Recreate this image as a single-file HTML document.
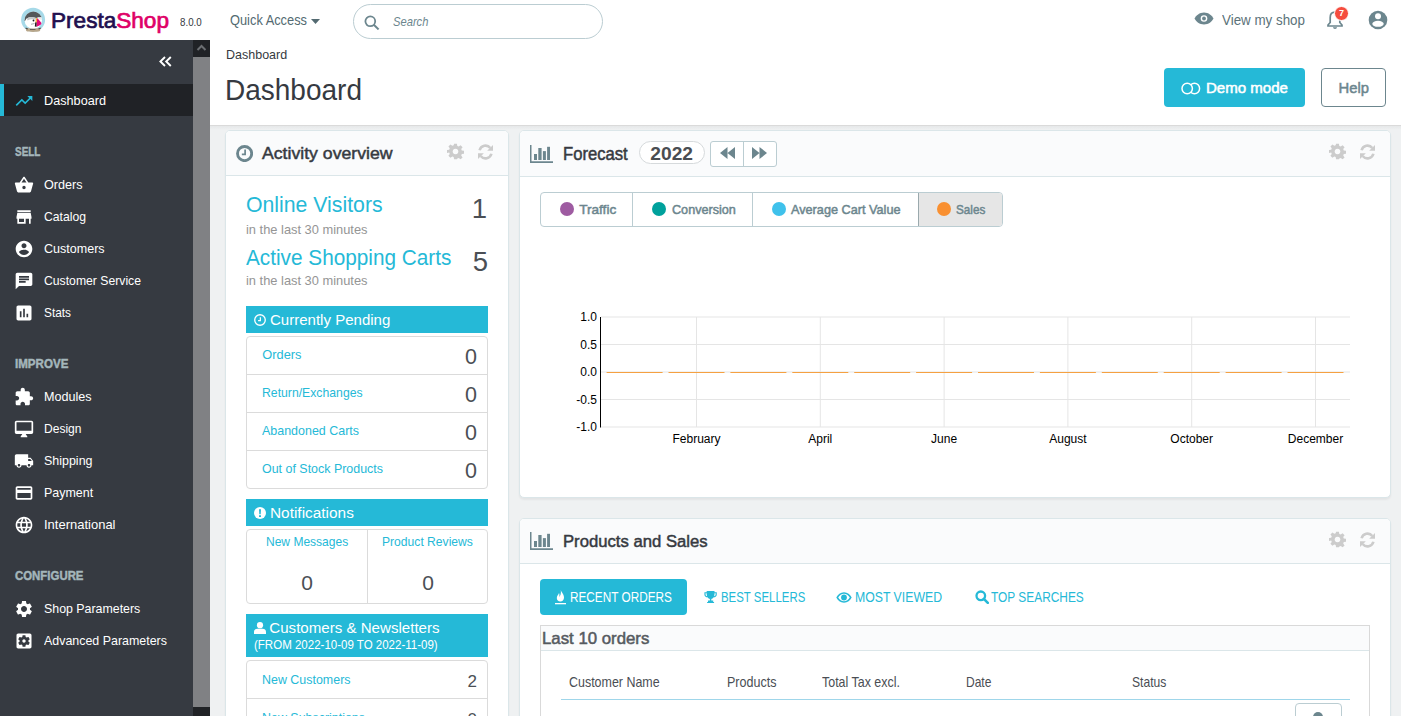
<!DOCTYPE html>
<html><head><meta charset="utf-8"><style>
*{box-sizing:border-box;margin:0;padding:0}
html,body{width:1401px;height:716px;overflow:hidden;background:#eff1f2;font-family:"Liberation Sans",sans-serif;color:#363a41}
.a{position:absolute}
.nw{white-space:nowrap}
.panel{background:#fff;border:1px solid #dbe6e9;border-radius:5px;overflow:hidden;box-shadow:0 2px 2px rgba(0,0,0,.05)}
.ph{background:#fafbfc;border-bottom:1px solid #dbe6e9}
</style></head><body>
<div class="a" style="left:0px;top:0px;width:1401px;height:40px;background:#fff"></div><svg class="a" style="left:19px;top:6px" width="28" height="28" viewBox="0 0 28 28">
<defs><clipPath id="cp"><circle cx="14.3" cy="14.2" r="8.7"/></clipPath></defs>
<circle cx="14.1" cy="13.8" r="12" fill="#a6d9e8"/>
<g clip-path="url(#cp)">
<rect x="0" y="0" width="28" height="28" fill="#fff"/>
<path d="M4 4H25V11.5C22 11 19 11.3 17 12C14 11 10 11.2 7.5 12.5L6 15H4Z" fill="#545759"/>
<path d="M8 12.2C10.5 10.8 14 10.8 17.3 12L16.5 13.8C14 13 11 13.2 8.5 14.5Z" fill="#c4c8ca"/>
<path d="M18.5 11.2L22.5 11.5L23.5 14L19.5 13Z" fill="#e8eaeb"/>
<path d="M18.3 12L23.4 18L17.6 20.8C17.3 18 17.5 15 18.3 12Z" fill="#e4087a"/>
<path d="M17 12.2L18.2 12L17.6 16.5L16.3 16.8Z" fill="#f6a623"/>
<path d="M16.2 16.5L17.6 16.3L17.5 20.8L15.8 20.5Z" fill="#1d1d1d"/>
<path d="M12 18.3L15.5 17.5" stroke="#777" stroke-width="0.6"/>
</g>
<circle cx="14.5" cy="14.5" r="0.9" fill="#1d1d1d"/>
<path d="M6.8 21.8C9 22.8 19 22.8 21.5 21.8L21 25C18 26.2 10 26.2 7.2 25Z" fill="#b9a78b"/>
<path d="M6.8 21.5L9 22.6L8.5 23.6L6.5 22.8Z M21.5 21.5L19.3 22.6L19.8 23.6L21.8 22.8Z M11 23.3H16.5V24H11Z" fill="#4a4a4a"/>
</svg><div class="a nw" style="left:50.5px;top:9.8px;font-size:22px;line-height:22px;color:#363a41;transform-origin:0 0;transform:scaleX(1.0262);-webkit-text-stroke:0.7px"><span style="color:#22104f">Presta</span><span style="color:#df0067">Shop</span></div><div class="a nw" style="left:180px;top:17.1px;font-size:10.6px;line-height:10.6px;color:#363a41;transform-origin:0 0;transform:scaleX(0.9210)">8.0.0</div><div class="a nw" style="left:229.5px;top:13.3px;font-size:14.2px;line-height:14.2px;color:#536a71;transform-origin:0 0;transform:scaleX(0.9042)">Quick Access</div><svg class="a" style="left:311px;top:19px" width="9" height="5" viewBox="0 0 9 5"><path d="M0 0H9L4.5 5Z" fill="#536a71"/></svg><div class="a" style="left:353px;top:4px;width:250px;height:35px;border:1px solid #bbcdd2;border-radius:17.5px"></div><svg class="a" style="left:364px;top:14.5px" width="16" height="15" viewBox="0 0 16 15"><circle cx="6.3" cy="6.3" r="4.9" fill="none" stroke="#6c868e" stroke-width="1.8"/><path d="M9.8 9.8 L14.6 14.4" stroke="#6c868e" stroke-width="2"/></svg><div class="a nw" style="left:392.5px;top:15px;font-size:13.6px;line-height:13.6px;color:#6c868e;font-style:italic;transform-origin:0 0;transform:scaleX(0.8218)">Search</div><svg class="a" style="left:1194px;top:12px" width="20" height="13" viewBox="0 0 20 13"><path d="M10 0.5C5.5 0.5 2 3.5 0.5 6.5C2 9.5 5.5 12.5 10 12.5C14.5 12.5 18 9.5 19.5 6.5C18 3.5 14.5 0.5 10 0.5Z" fill="#6c868e"/><circle cx="10" cy="6.5" r="3.3" fill="#fff"/><circle cx="10" cy="6.5" r="1.9" fill="#6c868e"/></svg><div class="a nw" style="left:1222px;top:13.2px;font-size:14.6px;line-height:14.6px;color:#5b7279;transform-origin:0 0;transform:scaleX(0.9163)">View my shop</div><svg class="a" style="left:1326px;top:10px" width="18" height="19" viewBox="0 0 18 19"><path d="M9 2.2C6 2.2 4.2 4.5 4.2 7.5V12.5L2 15V16H16V15L13.8 12.5V7.5C13.8 4.5 12 2.2 9 2.2Z" fill="none" stroke="#6c868e" stroke-width="1.7"/><path d="M7 17.3H11C11 18.3 10 18.9 9 18.9S7 18.3 7 17.3Z" fill="#6c868e"/></svg><div class="a" style="left:1334px;top:5.6px;width:15px;height:15px;border-radius:7.5px;border:1.5px solid #fff;background:#f54c3e;color:#fff;font-size:9px;font-weight:700;line-height:12px;text-align:center">7</div><svg class="a" style="left:1368px;top:10px" width="20" height="20" viewBox="0 0 20 20"><circle cx="10" cy="10" r="9.3" fill="#6c868e"/><circle cx="10" cy="6.3" r="3" fill="#fff"/><ellipse cx="10" cy="13.8" rx="5.7" ry="3" fill="#fff"/></svg><div class="a" style="left:0px;top:40px;width:193px;height:676px;background:#363a41"></div><svg class="a" style="left:158px;top:56px" width="15" height="11" viewBox="0 0 15 11"><path d="M7 1L2.4 5.5L7 10M12.8 1L8.2 5.5L12.8 10" fill="none" stroke="#fff" stroke-width="1.9"/></svg><div class="a" style="left:0px;top:84px;width:193px;height:32px;background:#202226"></div><div class="a" style="left:0px;top:84px;width:4px;height:32px;background:#25b9d7"></div><svg class="a" style="left:14px;top:90.7px" width="20" height="20" viewBox="0 0 24 24"><path d="M16 6l2.29 2.29-4.88 4.88-4-4L2 16.59 3.41 18l6-6 4 4 6.3-6.29L22 12V6z" fill="#25b9d7"/></svg><div class="a nw" style="left:44px;top:94.0px;font-size:13.6px;line-height:13.6px;color:#fff;transform-origin:0 0;transform:scaleX(0.9321)">Dashboard</div><div class="a nw" style="left:15.3px;top:146px;font-size:12.3px;line-height:12.3px;color:#a4b6bb;font-weight:700;-webkit-text-stroke:0.45px #a4b6bb;transform-origin:0 0;transform:scaleX(0.8080)">SELL</div><svg class="a" style="left:14px;top:175.0px" width="20" height="20" viewBox="0 0 24 24"><path d="M17.21 9l-4.38-6.56c-.19-.28-.51-.42-.83-.42-.32 0-.64.14-.83.43L6.79 9H2c-.55 0-1 .45-1 1 0 .09.01.18.04.27l2.54 9.27c.23.84 1 1.46 1.920 1.46h13c.92 0 1.69-.62 1.93-1.46l2.54-9.27L23 10c0-.55-.45-1-1-1h-4.79zM9 9l3-4.4L15 9H9zm3 8c-1.1 0-2-.9-2-2s.9-2 2-2 2 .9 2 2-.9 2-2 2z" fill="#fff"/></svg><div class="a nw" style="left:44px;top:178.3px;font-size:13.6px;line-height:13.6px;color:#fff;transform-origin:0 0;transform:scaleX(0.9291)">Orders</div><svg class="a" style="left:14px;top:207.0px" width="20" height="20" viewBox="0 0 24 24"><path d="M20 4H4v2h16V4zm1 10v-2l-1-5H4l-1 5v2h1v6h10v-6h4v6h2v-6h1zm-9 4H6v-4h6v4z" fill="#fff"/></svg><div class="a nw" style="left:44px;top:210.3px;font-size:13.6px;line-height:13.6px;color:#fff;transform-origin:0 0;transform:scaleX(0.8963)">Catalog</div><svg class="a" style="left:14px;top:239.0px" width="20" height="20" viewBox="0 0 24 24"><path d="M12 2C6.48 2 2 6.48 2 12s4.48 10 10 10 10-4.48 10-10S17.52 2 12 2zm0 3c1.66 0 3 1.34 3 3s-1.34 3-3 3-3-1.34-3-3 1.34-3 3-3zm0 14.2c-2.5 0-4.710-1.28-6-3.22.03-1.99 4-3.08 6-3.08 1.99 0 5.97 1.09 6 3.08-1.29 1.94-3.5 3.22-6 3.22z" fill="#fff"/></svg><div class="a nw" style="left:44px;top:242.3px;font-size:13.6px;line-height:13.6px;color:#fff;transform-origin:0 0;transform:scaleX(0.9221)">Customers</div><svg class="a" style="left:14px;top:271.0px" width="20" height="20" viewBox="0 0 24 24"><path d="M20 2H4c-1.1 0-1.99.9-1.99 2L2 22l4-4h14c1.1 0 2-.9 2-2V4c0-1.1-.9-2-2-2zM6 9h12v2H6V9zm8 5H6v-2h8v2zm4-6H6V6h12v2z" fill="#fff"/></svg><div class="a nw" style="left:44px;top:274.3px;font-size:13.6px;line-height:13.6px;color:#fff;transform-origin:0 0;transform:scaleX(0.8979)">Customer Service</div><svg class="a" style="left:14px;top:303.0px" width="20" height="20" viewBox="0 0 24 24"><path d="M19 3H5c-1.1 0-2 .9-2 2v14c0 1.1.9 2 2 2h14c1.1 0 2-.9 2-2V5c0-1.1-.9-2-2-2zM9 17H7v-7h2v7zm4 0h-2V7h2v10zm4 0h-2v-4h2v4z" fill="#fff"/></svg><div class="a nw" style="left:44px;top:306.3px;font-size:13.6px;line-height:13.6px;color:#fff;transform-origin:0 0;transform:scaleX(0.8714)">Stats</div><div class="a nw" style="left:15.3px;top:358px;font-size:12.3px;line-height:12.3px;color:#a4b6bb;font-weight:700;-webkit-text-stroke:0.45px #a4b6bb;transform-origin:0 0;transform:scaleX(0.9415)">IMPROVE</div><svg class="a" style="left:14px;top:386.7px" width="20" height="20" viewBox="0 0 24 24"><path d="M20.5 11H19V7c0-1.1-.9-2-2-2h-4V3.5C13 2.12 11.88 1 10.5 1S8 2.12 8 3.5V5H4c-1.1 0-1.99.9-1.990 2v3.8H3.5c1.49 0 2.7 1.21 2.7 2.7s-1.21 2.7-2.7 2.7H2V20c0 1.1.9 2 2 2h3.8v-1.5c0-1.49 1.21-2.7 2.7-2.7 1.49 0 2.7 1.21 2.7 2.7V22H17c1.1 0 2-.9 2-2v-4h1.5c1.38 0 2.5-1.12 2.5-2.5S21.88 11 20.5 11z" fill="#fff"/></svg><div class="a nw" style="left:44px;top:390.0px;font-size:13.6px;line-height:13.6px;color:#fff;transform-origin:0 0;transform:scaleX(0.9262)">Modules</div><svg class="a" style="left:14px;top:418.7px" width="20" height="20" viewBox="0 0 24 24"><path d="M21 2H3c-1.1 0-2 .9-2 2v12c0 1.1.9 2 2 2h7l-2 3v1h8v-1l-2-3h7c1.1 0 2-.9 2-2V4c0-1.1-.9-2-2-2zm0 12H3V4h18v10z" fill="#fff"/></svg><div class="a nw" style="left:44px;top:422.0px;font-size:13.6px;line-height:13.6px;color:#fff;transform-origin:0 0;transform:scaleX(0.8859)">Design</div><svg class="a" style="left:14px;top:450.7px" width="20" height="20" viewBox="0 0 24 24"><path d="M20 8h-3V4H3c-1.1 0-2 .9-2 2v11h2c0 1.66 1.34 3 3 3s3-1.34 3-3h6c0 1.66 1.34 3 3 3s3-1.34 3-3h2v-5l-3-4zM6 18.5c-.83 0-1.5-.67-1.5-1.5s.67-1.5 1.5-1.5 1.5.67 1.5 1.5-.67 1.5-1.5 1.5zm13.5-9l1.96 2.5H17V9.5h2.5zm-1.5 9c-.83 0-1.5-.67-1.5-1.5s.67-1.5 1.5-1.5 1.5.67 1.5 1.5-.67 1.5-1.5 1.5z" fill="#fff"/></svg><div class="a nw" style="left:44px;top:454.0px;font-size:13.6px;line-height:13.6px;color:#fff;transform-origin:0 0;transform:scaleX(0.9164)">Shipping</div><svg class="a" style="left:14px;top:482.7px" width="20" height="20" viewBox="0 0 24 24"><path d="M20 4H4c-1.11 0-1.99.89-1.99 2L2 18c0 1.11.89 2 2 2h16c1.11 0 2-.89 2-2V6c0-1.11-.89-2-2-2zm0 14H4v-6h16v6zm0-10H4V6h16v2z" fill="#fff"/></svg><div class="a nw" style="left:44px;top:486.0px;font-size:13.6px;line-height:13.6px;color:#fff;transform-origin:0 0;transform:scaleX(0.9169)">Payment</div><svg class="a" style="left:14px;top:514.7px" width="20" height="20" viewBox="0 0 24 24"><path d="M11.99 2C6.47 2 2 6.48 2 12s4.470 10 9.99 10C17.52 22 22 17.52 22 12S17.52 2 11.99 2zm6.93 6h-2.95c-.32-1.25-.78-2.45-1.38-3.56 1.84.63 3.37 1.91 4.33 3.56zM12 4.04c.83 1.2 1.48 2.53 1.91 3.96h-3.82c.43-1.43 1.08-2.76 1.91-3.96zM4.26 14C4.1 13.36 4 12.69 4 12s.1-1.36.26-2h3.38c-.08.66-.14 1.32-.14 2 0 .68.06 1.34.14 2H4.26zm.82 2h2.95c.32 1.25.78 2.45 1.38 3.56-1.84-.63-3.37-1.9-4.33-3.56zm2.95-8H5.08c.96-1.66 2.49-2.93 4.33-3.56C8.81 5.55 8.35 6.75 8.03 8zM12 19.96c-.83-1.2-1.48-2.53-1.91-3.96h3.820c-.43 1.43-1.08 2.76-1.91 3.96zM14.34 14H9.66c-.09-.66-.16-1.32-.16-2 0-.68.07-1.35.16-2h4.68c.09.65.16 1.32.16 2 0 .68-.07 1.34-.16 2zm.25 5.56c.6-1.11 1.06-2.31 1.38-3.56h2.95c-.96 1.65-2.49 2.93-4.33 3.56zM16.36 14c.08-.66.14-1.32.14-2 0-.68-.06-1.34-.14-2h3.38c.16.64.26 1.31.26 2s-.1 1.36-.26 2h-3.38z" fill="#fff"/></svg><div class="a nw" style="left:44px;top:518.0px;font-size:13.6px;line-height:13.6px;color:#fff;transform-origin:0 0;transform:scaleX(0.9555)">International</div><div class="a nw" style="left:15.3px;top:570px;font-size:12.3px;line-height:12.3px;color:#a4b6bb;font-weight:700;-webkit-text-stroke:0.45px #a4b6bb;transform-origin:0 0;transform:scaleX(0.9282)">CONFIGURE</div><svg class="a" style="left:14px;top:598.5px" width="20" height="20" viewBox="0 0 24 24"><path d="M19.14 12.94c.04-.3.06-.61.06-.94 0-.32-.02-.64-.07-.94l2.03-1.58c.18-.14.23-.41.12-.61l-1.92-3.32c-.12-.22-.37-.29-.59-.22l-2.39.96c-.5-.38-1.03-.7-1.62-.94l-.36-2.54c-.04-.24-.24-.41-.48-.41h-3.84c-.24 0-.43.17-.47.41l-.36 2.54c-.59.24-1.13.57-1.62.94l-2.39-.96c-.22-.08-.47 0-.59.22L2.74 8.87c-.12.21-.08.47.12.61l2.03 1.58c-.05.3-.09.63-.09.94s.02.64.07.94l-2.03 1.58c-.18.14-.23.41-.12.61l1.92 3.32c.12.22.37.29.59.22l2.39-.96c.5.38 1.03.7 1.62.94l.36 2.54c.05.24.24.41.48.41h3.84c.24 0 .44-.17.47-.41l.36-2.54c.59-.24 1.13-.56 1.62-.94l2.39.96c.22.08.47 0 .59-.22l1.92-3.32c.12-.22.07-.47-.12-.61l-2.01-1.58zM12 15.6c-1.98 0-3.6-1.62-3.6-3.6s1.62-3.6 3.6-3.6 3.6 1.62 3.6 3.6-1.62 3.6-3.6 3.6z" fill="#fff"/></svg><div class="a nw" style="left:44px;top:601.8px;font-size:13.6px;line-height:13.6px;color:#fff;transform-origin:0 0;transform:scaleX(0.9102)">Shop Parameters</div><svg class="a" style="left:14px;top:630.5px" width="20" height="20" viewBox="0 0 24 24"><path d="M12 10c-1.1 0-2 .9-2 2s.9 2 2 2 2-.9 2-2-.9-2-2-2zm7-7H5c-1.11 0-2 .9-2 2v14c0 1.1.89 2 2 2h14c1.11 0 2-.9 2-2V5c0-1.1-.89-2-2-2zm-1.75 9c0 .23-.02.46-.05.68l1.48 1.16c.13.11.17.3.08.45l-1.4 2.42c-.09.15-.27.21-.43.15l-1.74-.7c-.36.28-.76.51-1.18.69l-.26 1.85c-.03.17-.18.3-.35.3h-2.8c-.17 0-.32-.13-.35-.29l-.26-1.850c-.43-.18-.82-.41-1.18-.69l-1.74.7c-.16.06-.34 0-.43-.15l-1.4-2.42c-.09-.15-.05-.34.08-.45l1.48-1.16c-.03-.23-.05-.46-.05-.69 0-.23.02-.46.05-.68l-1.48-1.16c-.13-.11-.17-.3-.08-.45l1.4-2.42c.09-.15.27-.21.43-.15l1.74.7c.36-.28.76-.51 1.18-.69l.26-1.85c.03-.17.18-.3.35-.3h2.8c.17 0 .32.13.35.29l.26 1.85c.43.18.82.41 1.18.69l1.74-.7c.16-.06.34 0 .43.15l1.4 2.42c.09.15.05.34-.08.45l-1.48 1.16c.03.23.05.46.05.69z" fill="#fff"/></svg><div class="a nw" style="left:44px;top:633.8px;font-size:13.6px;line-height:13.6px;color:#fff;transform-origin:0 0;transform:scaleX(0.9138)">Advanced Parameters</div><div class="a" style="left:193px;top:40px;width:17px;height:676px;background:#202226"></div><div class="a" style="left:193px;top:57px;width:17px;height:650px;background:#808184"></div><svg class="a" style="left:196px;top:43px" width="11" height="9" viewBox="0 0 11 9"><path d="M1.5 7L5.5 3L9.5 7" fill="none" stroke="#6b6e72" stroke-width="2"/></svg><div class="a" style="left:210px;top:40px;width:1191px;height:86px;background:#fff;border-bottom:1px solid #dadada"></div><div class="a" style="left:210px;top:126px;width:1191px;height:4px;background:linear-gradient(#e6e8e9,#eff1f2)"></div><div class="a nw" style="left:225.6px;top:47.9px;font-size:13.2px;line-height:13.2px;color:#363a41;transform-origin:0 0;transform:scaleX(0.9486)">Dashboard</div><div class="a nw" style="left:225.2px;top:75.2px;font-size:30.2px;line-height:30.2px;color:#363a41;transform-origin:0 0;transform:scaleX(0.9276)">Dashboard</div><div class="a" style="left:1164px;top:68px;width:141px;height:39px;background:#25b9d7;border-radius:4px"></div><svg class="a" style="left:1181px;top:82px" width="20" height="13" viewBox="0 0 20 13"><path d="M9.8 2.75A5.2 5.2 0 1 1 9.8 10.25" fill="none" stroke="#fff" stroke-width="1.5"/><circle cx="6.2" cy="6.5" r="5.2" fill="none" stroke="#fff" stroke-width="1.5"/></svg><div class="a nw" style="left:1205.6px;top:80.8px;font-size:14.8px;line-height:14.8px;color:#fff;-webkit-text-stroke:0.5px #fff;transform-origin:0 0;transform:scaleX(1.0173)">Demo mode</div><div class="a" style="left:1321px;top:68px;width:65px;height:39px;border:1px solid #6c868e;border-radius:4px"></div><div class="a nw" style="left:1338.5px;top:80.8px;font-size:14.8px;line-height:14.8px;color:#6c868e;-webkit-text-stroke:0.5px #6c868e">Help</div><div class="a panel" style="left:225px;top:130px;width:284px;height:600px"><div class="a ph" style="left:0;top:0;width:282px;height:45px"></div></div><svg class="a" style="left:236px;top:145px" width="17.2" height="17.2" viewBox="0 0 20 20"><circle cx="10" cy="10" r="8.25" fill="none" stroke="#6c868e" stroke-width="3.3"/><path d="M10.6 5.3V10.9H6.8" fill="none" stroke="#6c868e" stroke-width="2"/></svg><div class="a nw" style="left:262.4px;top:145.2px;font-size:17.4px;line-height:17.4px;color:#363a41;-webkit-text-stroke:0.5px #363a41;transform-origin:0 0;transform:scaleX(1.0153)">Activity overview</div><svg class="a" style="left:447px;top:143px" width="17" height="17" viewBox="0 0 24 24"><path fill="#ccc" d="M10 1h4l.6 3.2 1.9.8 2.7-1.9 2.8 2.8-1.9 2.7.8 1.9 3.1.6v4l-3.1.6-.8 1.9 1.9 2.7-2.8 2.8-2.7-1.9-1.9.8L14 23h-4l-.6-3.2-1.9-.8-2.7 1.9-2.8-2.8 1.9-2.7-.8-1.9L0 14v-4l3.1-.6.8-1.9L2 4.8 4.8 2l2.7 1.9 1.9-.8z M12 8a4 4 0 1 0 0.01 0z"/></svg><svg class="a" style="left:477px;top:144px" width="17" height="16" viewBox="0 0 17 16"><path d="M2.6 6.3A6.1 6.1 0 0 1 13.3 4" fill="none" stroke="#ccc" stroke-width="2.6"/><path d="M16 1V6.8H10.2Z" fill="#ccc"/><path d="M14.4 9.7A6.1 6.1 0 0 1 3.7 12" fill="none" stroke="#ccc" stroke-width="2.6"/><path d="M1 15V9.2H6.8Z" fill="#ccc"/></svg><div class="a nw" style="left:246.4px;top:193.9px;font-size:21.9px;line-height:21.9px;color:#25b9d7;transform-origin:0 0;transform:scaleX(0.9706)">Online Visitors</div><div class="a nw" style="left:246.4px;top:223px;font-size:13px;line-height:13px;color:#959595;transform-origin:0 0;transform:scaleX(0.9889)">in the last 30 minutes</div><div class="a nw" style="left:440px;top:195px;font-size:27.5px;line-height:27.5px;color:#4b4f55;width:47px;text-align:right">1</div><div class="a nw" style="left:246.4px;top:248px;font-size:21.4px;line-height:21.4px;color:#25b9d7;transform-origin:0 0;transform:scaleX(0.9705)">Active Shopping Carts</div><div class="a nw" style="left:246.4px;top:274.2px;font-size:13px;line-height:13px;color:#959595;transform-origin:0 0;transform:scaleX(0.9889)">in the last 30 minutes</div><div class="a nw" style="left:440px;top:247.7px;font-size:27.5px;line-height:27.5px;color:#4b4f55;width:48px;text-align:right">5</div><div class="a" style="left:246px;top:306px;width:242px;height:27px;background:#25b9d7"></div><svg class="a" style="left:254px;top:314px" width="12" height="12" viewBox="0 0 20 20"><circle cx="10" cy="10" r="8.8" fill="none" stroke="#fff" stroke-width="2.2"/><path d="M10.6 5.3V10.9H6.8" fill="none" stroke="#fff" stroke-width="2"/></svg><div class="a nw" style="left:270px;top:312px;font-size:15.3px;line-height:15.3px;color:#fff;transform-origin:0 0;transform:scaleX(0.9824)">Currently Pending</div><div class="a" style="left:246px;top:336px;width:242px;height:153px;border:1px solid #dbdbdb;border-radius:4px"></div><div class="a nw" style="left:262.3px;top:348.8px;font-size:12.8px;line-height:12.8px;color:#25b9d7">Orders</div><div class="a nw" style="left:430px;top:347px;font-size:21.5px;line-height:21.5px;color:#4b4f55;width:47px;text-align:right">0</div><div class="a" style="left:247px;top:374px;width:240px;height:1px;background:#dbdbdb"></div><div class="a nw" style="left:262.3px;top:386.8px;font-size:12.8px;line-height:12.8px;color:#25b9d7;transform-origin:0 0;transform:scaleX(0.9555)">Return/Exchanges</div><div class="a nw" style="left:430px;top:385px;font-size:21.5px;line-height:21.5px;color:#4b4f55;width:47px;text-align:right">0</div><div class="a" style="left:247px;top:412px;width:240px;height:1px;background:#dbdbdb"></div><div class="a nw" style="left:262.3px;top:424.8px;font-size:12.8px;line-height:12.8px;color:#25b9d7;transform-origin:0 0;transform:scaleX(0.9738)">Abandoned Carts</div><div class="a nw" style="left:430px;top:423px;font-size:21.5px;line-height:21.5px;color:#4b4f55;width:47px;text-align:right">0</div><div class="a" style="left:247px;top:450px;width:240px;height:1px;background:#dbdbdb"></div><div class="a nw" style="left:262.3px;top:462.8px;font-size:12.8px;line-height:12.8px;color:#25b9d7;transform-origin:0 0;transform:scaleX(0.9720)">Out of Stock Products</div><div class="a nw" style="left:430px;top:461px;font-size:21.5px;line-height:21.5px;color:#4b4f55;width:47px;text-align:right">0</div><div class="a" style="left:246px;top:499px;width:242px;height:27px;background:#25b9d7"></div><svg class="a" style="left:254px;top:507px" width="12" height="12" viewBox="0 0 12 12"><circle cx="6" cy="6" r="6" fill="#fff"/><path d="M5 2.3H7L6.7 7.2H5.3Z M5 8.2H7V9.9H5Z" fill="#25b9d7"/></svg><div class="a nw" style="left:270px;top:505.20000000000005px;font-size:15.4px;line-height:15.4px;color:#fff">Notifications</div><div class="a" style="left:246px;top:529px;width:242px;height:75px;border:1px solid #dbdbdb;border-radius:4px"></div><div class="a" style="left:367px;top:530px;width:1px;height:73px;background:#dbdbdb"></div><div class="a nw" style="left:266px;top:534.7px;font-size:13px;line-height:13px;color:#25b9d7;transform-origin:0 0;transform:scaleX(0.9249)">New Messages</div><div class="a nw" style="left:382px;top:534.7px;font-size:13px;line-height:13px;color:#25b9d7;transform-origin:0 0;transform:scaleX(0.9319)">Product Reviews</div><div class="a nw" style="left:247px;top:571.9px;font-size:21px;line-height:21px;color:#4b4f55;width:120px;text-align:center">0</div><div class="a nw" style="left:368px;top:571.9px;font-size:21px;line-height:21px;color:#4b4f55;width:120px;text-align:center">0</div><div class="a" style="left:246px;top:614px;width:242px;height:43px;background:#25b9d7"></div><svg class="a" style="left:254px;top:622px" width="12" height="12" viewBox="0 0 12 12"><circle cx="6" cy="3.2" r="3.1" fill="#fff"/><path d="M0 12V9.8C0 7.8 1.6 6.8 3.2 6.8H8.8C10.4 6.8 12 7.8 12 9.8V12Z" fill="#fff"/></svg><div class="a nw" style="left:269.3px;top:620px;font-size:15.1px;line-height:15.1px;color:#fff">Customers &amp; Newsletters</div><div class="a nw" style="left:254px;top:638.7px;font-size:12.9px;line-height:12.9px;color:#fff;transform-origin:0 0;transform:scaleX(0.8933)">(FROM 2022-10-09 TO 2022-11-09)</div><div class="a" style="left:246px;top:660px;width:242px;height:100px;border:1px solid #dbdbdb;border-radius:4px"></div><div class="a" style="left:247px;top:698px;width:240px;height:1px;background:#dbdbdb"></div><div class="a nw" style="left:262.3px;top:673.4px;font-size:13.4px;line-height:13.4px;color:#25b9d7;transform-origin:0 0;transform:scaleX(0.9291)">New Customers</div><div class="a nw" style="left:430px;top:672.9px;font-size:17px;line-height:17px;color:#4b4f55;width:47px;text-align:right">2</div><div class="a nw" style="left:262.3px;top:711.4px;font-size:13.4px;line-height:13.4px;color:#25b9d7;transform-origin:0 0;transform:scaleX(0.9287)">New Subscriptions</div><div class="a nw" style="left:430px;top:710.9px;font-size:17px;line-height:17px;color:#4b4f55;width:47px;text-align:right">0</div><div class="a panel" style="left:519px;top:130px;width:872px;height:368px"><div class="a ph" style="left:0;top:0;width:870px;height:46px"></div></div><svg class="a" style="left:530px;top:145px" width="24" height="19" viewBox="0 0 24 19"><path d="M0 0H1.5V16.3H23V18H0Z" fill="#6c868e"/><rect x="4" y="9" width="3" height="6" fill="#6c868e"/><rect x="8.3" y="3" width="3.3" height="12" fill="#6c868e"/><rect x="12.9" y="6.1" width="3" height="8.9" fill="#6c868e"/><rect x="17.1" y="1.8" width="2.9" height="13.2" fill="#6c868e"/></svg><div class="a nw" style="left:562.8px;top:146px;font-size:17.7px;line-height:17.7px;color:#363a41;-webkit-text-stroke:0.5px #363a41;transform-origin:0 0;transform:scaleX(0.9402)">Forecast</div><div class="a" style="left:639px;top:141px;width:66px;height:23px;border:1px solid #d6dadc;border-radius:12px;background:#fff"></div><div class="a nw" style="left:650.3px;top:143.6px;font-size:19.2px;line-height:19.2px;color:#4a4d52;font-weight:700">2022</div><div class="a" style="left:710px;top:141px;width:67px;height:26px;border:1px solid #bbcdd2;border-radius:3px;background:#fff"></div><div class="a" style="left:743px;top:142px;width:1px;height:24px;background:#bbcdd2"></div><svg class="a" style="left:720px;top:147px" width="15" height="12" viewBox="0 0 15 12"><path d="M7.5 0V12L0 6Z M15 0V12L7.5 6Z" fill="#6c868e"/></svg><svg class="a" style="left:752px;top:147px" width="15" height="12" viewBox="0 0 15 12"><path d="M0 0V12L7.5 6Z M7.5 0V12L15 6Z" fill="#6c868e"/></svg><svg class="a" style="left:1329px;top:143px" width="17" height="17" viewBox="0 0 24 24"><path fill="#ccc" d="M10 1h4l.6 3.2 1.9.8 2.7-1.9 2.8 2.8-1.9 2.7.8 1.9 3.1.6v4l-3.1.6-.8 1.9 1.9 2.7-2.8 2.8-2.7-1.9-1.9.8L14 23h-4l-.6-3.2-1.9-.8-2.7 1.9-2.8-2.8 1.9-2.7-.8-1.9L0 14v-4l3.1-.6.8-1.9L2 4.8 4.8 2l2.7 1.9 1.9-.8z M12 8a4 4 0 1 0 0.01 0z"/></svg><svg class="a" style="left:1359px;top:144px" width="17" height="16" viewBox="0 0 17 16"><path d="M2.6 6.3A6.1 6.1 0 0 1 13.3 4" fill="none" stroke="#ccc" stroke-width="2.6"/><path d="M16 1V6.8H10.2Z" fill="#ccc"/><path d="M14.4 9.7A6.1 6.1 0 0 1 3.7 12" fill="none" stroke="#ccc" stroke-width="2.6"/><path d="M1 15V9.2H6.8Z" fill="#ccc"/></svg><div class="a" style="left:540px;top:192px;width:463px;height:35px;border:1px solid #bbcdd2;border-radius:4px;background:#fff;overflow:hidden"><div class="a" style="left:377px;top:0;width:86px;height:35px;background:#e6e6e6;border-left:1px solid #9aa9ad"></div></div><div class="a" style="left:632px;top:193px;width:1px;height:33px;background:#bbcdd2"></div><div class="a" style="left:752px;top:193px;width:1px;height:33px;background:#bbcdd2"></div><div class="a" style="left:560px;top:202px;width:14px;height:14px;border-radius:7px;background:#9e5ba1"></div><div class="a nw" style="left:579.2px;top:203px;font-size:13.6px;line-height:13.6px;color:#6c868e;-webkit-text-stroke:0.5px #6c868e">Traffic</div><div class="a" style="left:652px;top:202px;width:14px;height:14px;border-radius:7px;background:#00a19c"></div><div class="a nw" style="left:671.5px;top:203px;font-size:13.6px;line-height:13.6px;color:#6c868e;-webkit-text-stroke:0.5px #6c868e;transform-origin:0 0;transform:scaleX(0.9292)">Conversion</div><div class="a" style="left:772px;top:202px;width:14px;height:14px;border-radius:7px;background:#3fc1eb"></div><div class="a nw" style="left:791.2px;top:203px;font-size:13.6px;line-height:13.6px;color:#6c868e;-webkit-text-stroke:0.5px #6c868e;transform-origin:0 0;transform:scaleX(0.9328)">Average Cart Value</div><div class="a" style="left:937px;top:202px;width:14px;height:14px;border-radius:7px;background:#f99031"></div><div class="a nw" style="left:956px;top:203px;font-size:13.6px;line-height:13.6px;color:#6c868e;-webkit-text-stroke:0.5px #6c868e;transform-origin:0 0;transform:scaleX(0.8614)">Sales</div><svg class="a" style="left:560px;top:300px" width="820" height="160" viewBox="560 300 820 160"><line x1="601" x2="1350" y1="317" y2="317" stroke="#e5e5e5" stroke-width="1"/><line x1="601" x2="1350" y1="344.5" y2="344.5" stroke="#e5e5e5" stroke-width="1"/><line x1="601" x2="1350" y1="372" y2="372" stroke="#e5e5e5" stroke-width="1"/><line x1="601" x2="1350" y1="399.5" y2="399.5" stroke="#e5e5e5" stroke-width="1"/><line x1="601" x2="1350" y1="427" y2="427" stroke="#e5e5e5" stroke-width="1"/><line x1="696.5" x2="696.5" y1="317" y2="427" stroke="#e5e5e5" stroke-width="1"/><line x1="820.3" x2="820.3" y1="317" y2="427" stroke="#e5e5e5" stroke-width="1"/><line x1="944.1" x2="944.1" y1="317" y2="427" stroke="#e5e5e5" stroke-width="1"/><line x1="1067.9" x2="1067.9" y1="317" y2="427" stroke="#e5e5e5" stroke-width="1"/><line x1="1191.7" x2="1191.7" y1="317" y2="427" stroke="#e5e5e5" stroke-width="1"/><line x1="1315.5" x2="1315.5" y1="317" y2="427" stroke="#e5e5e5" stroke-width="1"/><line x1="600.5" x2="600.5" y1="317" y2="427.5" stroke="#000" stroke-width="1"/><line x1="606.6" x2="662.6" y1="372.5" y2="372.5" stroke="#f5a142" stroke-width="1.1"/><line x1="668.5" x2="724.5" y1="372.5" y2="372.5" stroke="#f5a142" stroke-width="1.1"/><line x1="730.4" x2="786.4" y1="372.5" y2="372.5" stroke="#f5a142" stroke-width="1.1"/><line x1="792.3" x2="848.3" y1="372.5" y2="372.5" stroke="#f5a142" stroke-width="1.1"/><line x1="854.2" x2="910.2" y1="372.5" y2="372.5" stroke="#f5a142" stroke-width="1.1"/><line x1="916.1" x2="972.1" y1="372.5" y2="372.5" stroke="#f5a142" stroke-width="1.1"/><line x1="978.0" x2="1034.0" y1="372.5" y2="372.5" stroke="#f5a142" stroke-width="1.1"/><line x1="1039.9" x2="1095.9" y1="372.5" y2="372.5" stroke="#f5a142" stroke-width="1.1"/><line x1="1101.8" x2="1157.8" y1="372.5" y2="372.5" stroke="#f5a142" stroke-width="1.1"/><line x1="1163.7" x2="1219.7" y1="372.5" y2="372.5" stroke="#f5a142" stroke-width="1.1"/><line x1="1225.6" x2="1281.6" y1="372.5" y2="372.5" stroke="#f5a142" stroke-width="1.1"/><line x1="1287.5" x2="1343.5" y1="372.5" y2="372.5" stroke="#f5a142" stroke-width="1.1"/><text x="597" y="321" text-anchor="end" font-family="Liberation Sans" font-size="12" fill="#000">1.0</text><text x="597" y="348.5" text-anchor="end" font-family="Liberation Sans" font-size="12" fill="#000">0.5</text><text x="597" y="376" text-anchor="end" font-family="Liberation Sans" font-size="12" fill="#000">0.0</text><text x="597" y="403.5" text-anchor="end" font-family="Liberation Sans" font-size="12" fill="#000">-0.5</text><text x="597" y="431" text-anchor="end" font-family="Liberation Sans" font-size="12" fill="#000">-1.0</text><text x="696.5" y="443" text-anchor="middle" font-family="Liberation Sans" font-size="12" fill="#000">February</text><text x="820.3" y="443" text-anchor="middle" font-family="Liberation Sans" font-size="12" fill="#000">April</text><text x="944.1" y="443" text-anchor="middle" font-family="Liberation Sans" font-size="12" fill="#000">June</text><text x="1067.9" y="443" text-anchor="middle" font-family="Liberation Sans" font-size="12" fill="#000">August</text><text x="1191.7" y="443" text-anchor="middle" font-family="Liberation Sans" font-size="12" fill="#000">October</text><text x="1315.5" y="443" text-anchor="middle" font-family="Liberation Sans" font-size="12" fill="#000">December</text></svg><div class="a panel" style="left:519px;top:518px;width:872px;height:220px"><div class="a ph" style="left:0;top:0;width:870px;height:45px"></div></div><svg class="a" style="left:530px;top:532px" width="24" height="19" viewBox="0 0 24 19"><path d="M0 0H1.5V16.3H23V18H0Z" fill="#6c868e"/><rect x="4" y="9" width="3" height="6" fill="#6c868e"/><rect x="8.3" y="3" width="3.3" height="12" fill="#6c868e"/><rect x="12.9" y="6.1" width="3" height="8.9" fill="#6c868e"/><rect x="17.1" y="1.8" width="2.9" height="13.2" fill="#6c868e"/></svg><div class="a nw" style="left:562.8px;top:533.3px;font-size:17.4px;line-height:17.4px;color:#363a41;-webkit-text-stroke:0.5px #363a41;transform-origin:0 0;transform:scaleX(0.9588)">Products and Sales</div><svg class="a" style="left:1329px;top:531px" width="17" height="17" viewBox="0 0 24 24"><path fill="#ccc" d="M10 1h4l.6 3.2 1.9.8 2.7-1.9 2.8 2.8-1.9 2.7.8 1.9 3.1.6v4l-3.1.6-.8 1.9 1.9 2.7-2.8 2.8-2.7-1.9-1.9.8L14 23h-4l-.6-3.2-1.9-.8-2.7 1.9-2.8-2.8 1.9-2.7-.8-1.9L0 14v-4l3.1-.6.8-1.9L2 4.8 4.8 2l2.7 1.9 1.9-.8z M12 8a4 4 0 1 0 0.01 0z"/></svg><svg class="a" style="left:1359px;top:532px" width="17" height="16" viewBox="0 0 17 16"><path d="M2.6 6.3A6.1 6.1 0 0 1 13.3 4" fill="none" stroke="#ccc" stroke-width="2.6"/><path d="M16 1V6.8H10.2Z" fill="#ccc"/><path d="M14.4 9.7A6.1 6.1 0 0 1 3.7 12" fill="none" stroke="#ccc" stroke-width="2.6"/><path d="M1 15V9.2H6.8Z" fill="#ccc"/></svg><div class="a" style="left:540px;top:579px;width:147px;height:36px;background:#25b9d7;border-radius:4px"></div><svg class="a" style="left:554px;top:590px" width="13" height="15" viewBox="0 0 13 15"><path d="M6.8 0C7.5 2.5 10 4 10 7.5C10 10 8.3 11.5 6.3 11.5C4.3 11.5 2.8 10 2.8 8C2.8 6 4.5 4.5 5 3C5.7 4.5 5.5 6 5 7C6.5 6 7.2 3.5 6.8 0Z" fill="#fff"/><rect x="1" y="13" width="11" height="1.3" fill="#fff"/></svg><div class="a nw" style="left:569.9px;top:589.2px;font-size:15.3px;line-height:15.3px;color:#fff;transform-origin:0 0;transform:scaleX(0.7701)">RECENT ORDERS</div><svg class="a" style="left:703.8px;top:591px" width="13.2" height="12.2" viewBox="0 0 15 14"><path d="M3 0H12V1.3H14.6V4C14.6 6 13 7.2 11 7.3C10.3 8.5 9 9.2 8.3 9.3V11H10.5V12.5H11.5V14H3.5V12.5H4.5V11H6.7V9.3C6 9.2 4.7 8.5 4 7.3C2 7.2 0.4 6 0.4 4V1.3H3Z M1.7 2.5V4C1.7 5 2.5 5.8 3.5 6C3.2 5 3 4 3 2.5Z M13.3 2.5H12C12 4 11.8 5 11.5 6C12.5 5.8 13.3 5 13.3 4Z" fill="#25b9d7"/></svg><div class="a nw" style="left:720.7px;top:589.2px;font-size:15.3px;line-height:15.3px;color:#25b9d7;transform-origin:0 0;transform:scaleX(0.7473)">BEST SELLERS</div><svg class="a" style="left:836px;top:592px" width="16" height="11" viewBox="0 0 16 11"><path d="M8 0.3C4.5 0.3 1.7 2.6 0.3 5.5C1.7 8.4 4.5 10.7 8 10.7S14.3 8.4 15.7 5.5C14.3 2.6 11.5 0.3 8 0.3Z M8 1.8C10.3 1.8 12.5 3.3 13.8 5.5C12.5 7.7 10.3 9.2 8 9.2S3.5 7.7 2.2 5.5C3.5 3.3 5.7 1.8 8 1.8Z" fill="#25b9d7"/><circle cx="8" cy="5.5" r="2.9" fill="#25b9d7"/></svg><div class="a nw" style="left:855.3px;top:589.2px;font-size:15.3px;line-height:15.3px;color:#25b9d7;transform-origin:0 0;transform:scaleX(0.8017)">MOST VIEWED</div><svg class="a" style="left:975px;top:590px" width="14" height="14" viewBox="0 0 14 14"><circle cx="5.8" cy="5.8" r="4.3" fill="none" stroke="#25b9d7" stroke-width="2.3"/><path d="M8.8 8.8L12.8 12.8" stroke="#25b9d7" stroke-width="2.6" stroke-linecap="round"/></svg><div class="a nw" style="left:991.4px;top:589.2px;font-size:15.3px;line-height:15.3px;color:#25b9d7;transform-origin:0 0;transform:scaleX(0.7778)">TOP SEARCHES</div><div class="a" style="left:540px;top:625px;width:830px;height:120px;border:1px solid #d9d9d9;background:#fff"></div><div class="a" style="left:541px;top:626px;width:828px;height:25px;background:#fafbfc;border-bottom:1px solid #dbe6e9"></div><div class="a nw" style="left:541.8px;top:629.7px;font-size:16.1px;line-height:16.1px;color:#555a60;-webkit-text-stroke:0.5px #555a60;transform-origin:0 0;transform:scaleX(1.0429)">Last 10 orders</div><div class="a nw" style="left:569.4px;top:675.2px;font-size:14.4px;line-height:14.4px;color:#4a4e54;transform-origin:0 0;transform:scaleX(0.8648)">Customer Name</div><div class="a nw" style="left:727.3px;top:675.2px;font-size:14.4px;line-height:14.4px;color:#4a4e54;transform-origin:0 0;transform:scaleX(0.8715)">Products</div><div class="a nw" style="left:822.4px;top:675.2px;font-size:14.4px;line-height:14.4px;color:#4a4e54;transform-origin:0 0;transform:scaleX(0.8644)">Total Tax excl.</div><div class="a nw" style="left:965.8px;top:675.2px;font-size:14.4px;line-height:14.4px;color:#4a4e54;transform-origin:0 0;transform:scaleX(0.8354)">Date</div><div class="a nw" style="left:1131.7px;top:675.2px;font-size:14.4px;line-height:14.4px;color:#4a4e54;transform-origin:0 0;transform:scaleX(0.8404)">Status</div><div class="a" style="left:561px;top:699px;width:789px;height:1px;background:#9fd6ea"></div><div class="a" style="left:1295px;top:703px;width:47px;height:30px;border:1px solid #bbcdd2;border-radius:4px;background:#fff"></div><div class="a" style="left:1313px;top:712px;width:10px;height:10px;border-radius:5px;background:#6c868e"></div>
</body></html>
